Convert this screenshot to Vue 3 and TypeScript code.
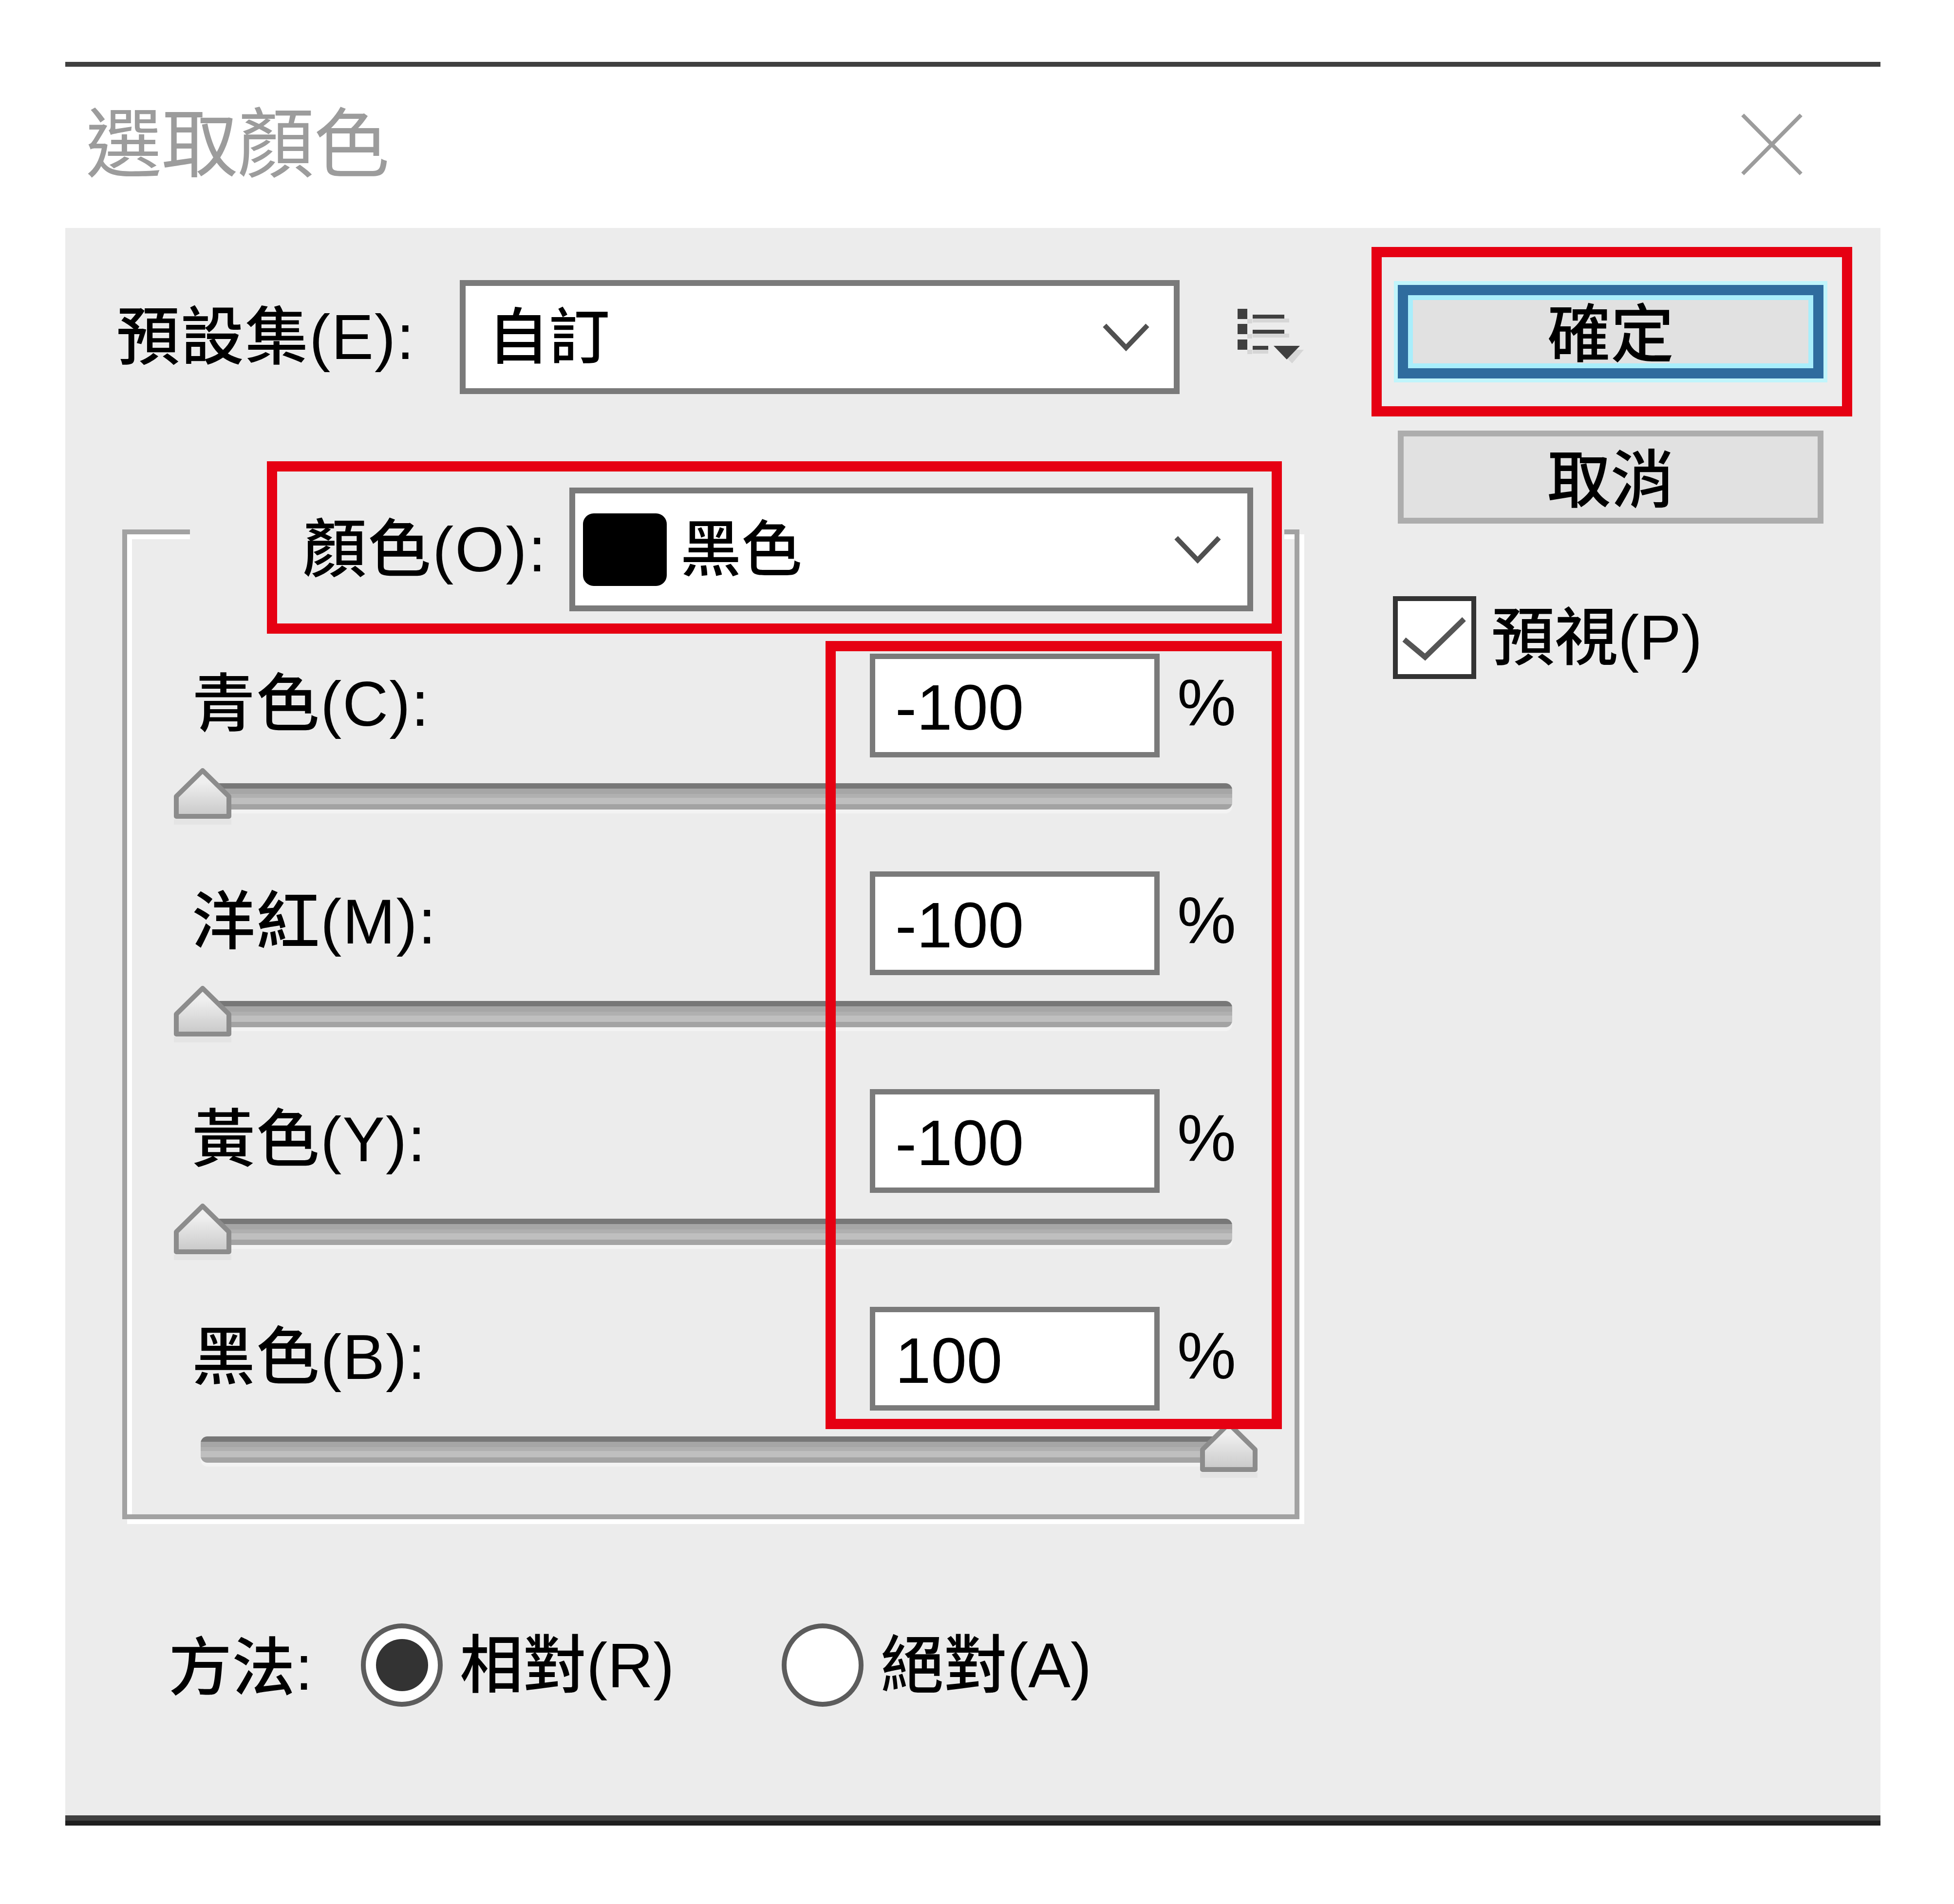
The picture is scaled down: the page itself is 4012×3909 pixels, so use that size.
<script setup lang="ts">
interface Channel {
  label: string
  value: string
  atMax: boolean
}

const channels: Channel[] = [
  { label: '青色(C):', value: '-100', atMax: false },
  { label: '洋紅(M):', value: '-100', atMax: false },
  { label: '黃色(Y):', value: '-100', atMax: false },
  { label: '黑色(B):', value: '100', atMax: true },
]
</script>

<template>
  <div class="page">
    <div class="dialog">
      <header class="titlebar">
        <span class="title">選取顏色</span>
        <svg class="close" viewBox="0 0 126 127" aria-label="關閉">
          <path d="M3 3 L123 124 M123 3 L3 124" />
        </svg>
      </header>

      <main class="panel">
        <section class="left">
          <div class="preset-row">
            <span class="preset-label">預設集(E):</span>
            <div class="select preset-select">
              <span class="select-text">自訂</span>
              <svg class="chevron" viewBox="0 0 96 60"><path d="M4 6 L48 52 L92 6" /></svg>
            </div>
            <svg class="preset-icon" viewBox="0 0 136 116">
              <g fill="#d6d6d6">
                <rect x="20" y="21" width="10" height="9" />
                <rect x="20" y="52" width="10" height="9" />
                <rect x="20" y="84" width="10" height="9" />
                <rect x="31" y="20" width="75" height="8" />
                <rect x="31" y="51" width="75" height="8" />
                <rect x="31" y="84" width="32" height="8" />
                <path d="M84 84 H136 L112 112 Z" />
              </g>
              <g fill="#3f3f3f">
                <rect x="0" y="0" width="20" height="21" />
                <rect x="0" y="31" width="20" height="21" />
                <rect x="0" y="63" width="20" height="21" />
                <rect x="31" y="12" width="65" height="8" />
                <rect x="31" y="43" width="65" height="8" />
                <rect x="31" y="76" width="32" height="8" />
                <path d="M74 76 H128 L101 104 Z" />
              </g>
            </svg>
          </div>

          <div class="group">
            <div class="legend">
              <div class="color-box">
                <span class="color-label">顏色(O):</span>
                <div class="select color-select">
                  <span class="swatch"></span>
                  <span class="select-text">黑色</span>
                  <svg class="chevron" viewBox="0 0 96 60"><path d="M4 6 L48 52 L92 6" /></svg>
                </div>
              </div>
            </div>

            <div class="channels">
              <div v-for="c in channels" :key="c.label" class="channel">
                <div class="channel-top">
                  <span class="channel-label">{{ c.label }}</span>
                  <div class="field">{{ c.value }}</div>
                  <span class="percent">%</span>
                </div>
                <div class="slider">
                  <div class="track"></div>
                  <svg class="thumb" :class="{ 'thumb-max': c.atMax }" viewBox="0 0 118 118">
                    <defs>
                      <linearGradient :id="'grad-' + c.value + c.atMax" x1="0" y1="0" x2="0" y2="1">
                        <stop offset="0.25" stop-color="#efefef" />
                        <stop offset="1" stop-color="#c8c8c8" />
                      </linearGradient>
                    </defs>
                    <rect x="0" y="107" width="118" height="11" fill="#e4e4e4" />
                    <path
                      d="M59 7 L5 60 V101 H113 V60 Z"
                      :fill="'url(#grad-' + c.value + c.atMax + ')'"
                      stroke="#8c8c8c"
                      stroke-width="10"
                      stroke-linejoin="round"
                    />
                  </svg>
                </div>
              </div>
            </div>

            <div class="values-box"></div>
          </div>

          <div class="method">
            <span class="method-label">方法:</span>
            <div class="radio-option">
              <span class="radio"><span class="radio-dot"></span></span>
              <span class="radio-text">相對(R)</span>
            </div>
            <div class="radio-option">
              <span class="radio"></span>
              <span class="radio-text">絕對(A)</span>
            </div>
          </div>
        </section>

        <aside class="right">
          <div class="ok-box">
            <button class="btn btn-ok" type="button">確定</button>
          </div>
          <button class="btn btn-cancel" type="button">取消</button>
          <div class="preview">
            <span class="checkbox">
              <svg viewBox="0 0 151 150"><path d="M13 79 L56 115 L136 37" /></svg>
            </span>
            <span class="preview-text">預視(P)</span>
          </div>
        </aside>
      </main>
    </div>
  </div>
</template>

<style>
html,
body {
  margin: 0;
  background: #fff;
}
</style>

<style scoped>
.page {
  box-sizing: border-box;
  width: 4012px;
  height: 3909px;
  padding: 127px 151px 0 134px;
  background: #fff;
  color: #000;
  font-family: "Liberation Sans", "Noto Sans CJK TC", sans-serif;
  font-size: 130px;
  line-height: 1;
  font-kerning: none;
}

.dialog {
  display: flex;
  flex-direction: column;
  height: 3621px;
  border-top: 10px solid #404040;
  border-bottom: 10px solid #1f1f1f;
  box-sizing: border-box;
}

.titlebar {
  flex: none;
  box-sizing: border-box;
  height: 331px;
  padding: 0 160px 12px 42px;
  display: flex;
  align-items: center;
  justify-content: space-between;
}

.title {
  font-size: 156px;
  color: #9c9c9c;
  font-weight: 400;
}

.close {
  width: 126px;
  height: 127px;
}

.close path {
  fill: none;
  stroke: #9c9c9c;
  stroke-width: 8;
}

.panel {
  flex: 1;
  display: flex;
  background: #ececec;
  font-weight: 500;
  box-shadow: inset 0 -11px 0 #404040;
}

.left {
  flex: none;
  width: 2682px;
  box-sizing: border-box;
  padding-top: 107px;
}

.preset-row {
  display: flex;
  align-items: center;
  height: 234px;
  margin-left: 105px;
}

.preset-label {
  flex: none;
  width: 705px;
  letter-spacing: 2px;
}

.select {
  box-sizing: border-box;
  display: flex;
  align-items: center;
  background: #fff;
  border: 12px solid #7a7a7a;
}

.preset-select {
  width: 1478px;
  height: 234px;
  padding: 0 50px 0 46px;
}

.select-text {
  flex: 1;
  font-size: 125px;
}

.chevron {
  flex: none;
  width: 96px;
  height: 60px;
}

.chevron path {
  fill: none;
  stroke: #505050;
  stroke-width: 10;
}

.preset-icon {
  flex: none;
  width: 136px;
  height: 116px;
  margin-left: 119px;
}

.group {
  position: relative;
  box-sizing: border-box;
  width: 2417px;
  margin: 278px 0 0 117px;
  padding-bottom: 75px;
  border: 10px solid #a2a2a2;
  box-shadow: inset 10px 10px 0 #fff, 10px 10px 0 #fff;
}

.legend {
  box-sizing: border-box;
  width: 2247px;
  margin: -150px 0 0 129px;
  padding: 0 5px 0 158px;
  background: #ececec;
}

.color-box {
  box-sizing: border-box;
  display: flex;
  align-items: center;
  height: 354px;
  padding: 33px 38px 25px 53px;
  border: 21px solid #e60012;
}

.color-label {
  flex: none;
  width: 547px;
  letter-spacing: 3px;
}

.color-select {
  flex: 1;
  height: 254px;
  padding: 0 54px 0 16px;
}

.swatch {
  flex: none;
  width: 172px;
  height: 149px;
  margin-right: 28px;
  border-radius: 22px;
  background: #000;
}

.channels {
  display: flex;
  flex-direction: column;
  gap: 96px;
  margin-top: 41px;
}

.channel-top {
  display: flex;
  align-items: center;
  height: 213px;
  margin-left: 133px;
}

.channel-label {
  flex: none;
  width: 1392px;
  padding-bottom: 8px;
  letter-spacing: 2px;
}

.field {
  flex: none;
  box-sizing: border-box;
  width: 595px;
  height: 213px;
  padding: 8px 0 0 41px;
  display: flex;
  align-items: center;
  background: #fff;
  border: 11px solid #7a7a7a;
  font-size: 132px;
}

.percent {
  flex: none;
  margin-left: 36px;
  padding-bottom: 14px;
  font-size: 136px;
}

.slider {
  position: relative;
  width: 2225px;
  height: 118px;
  margin: 20px 0 0 96px;
}

.track {
  box-sizing: border-box;
  height: 54px;
  margin: 0 52px 0 55px;
  position: relative;
  top: 33px;
  border-radius: 14px;
  box-shadow: 0 8px 0 #f3f3f3;
  background: linear-gradient(
    to bottom,
    #777 0 11px,
    #a6a6a6 11px 22px,
    #b0b0b0 22px 30px,
    #bfbfbf 30px 43px,
    #a3a3a3 43px 54px
  );
}

.thumb {
  position: absolute;
  top: 0;
  left: 0;
  width: 118px;
  height: 118px;
}

.thumb-max {
  left: auto;
  right: 0;
}

.values-box {
  position: absolute;
  left: 1434px;
  top: 219px;
  box-sizing: border-box;
  width: 937px;
  height: 1618px;
  border: 21px solid #e60012;
  pointer-events: none;
}

.method {
  display: flex;
  align-items: center;
  margin: 214px 0 0 212px;
  height: 171px;
}

.method-label {
  flex: none;
  width: 395px;
  padding-top: 10px;
}

.radio-option {
  flex: none;
  width: 864px;
  display: flex;
  align-items: center;
}

.radio {
  flex: none;
  box-sizing: border-box;
  width: 168px;
  height: 171px;
  margin-right: 35px;
  display: flex;
  align-items: center;
  justify-content: center;
  border: 10px solid #5c5c5c;
  border-radius: 50%;
  background: #fff;
}

.radio-dot {
  width: 107px;
  height: 107px;
  border-radius: 50%;
  background: #333;
}

.right {
  flex: none;
  width: 987px;
  box-sizing: border-box;
  padding-top: 39px;
}

.ok-box {
  box-sizing: border-box;
  height: 348px;
  padding: 57px 38px 57px 33px;
  border: 21px solid #e60012;
}

.btn {
  display: block;
  box-sizing: border-box;
  padding: 12px 0 0;
  background: #e1e1e1;
  color: #000;
  font: inherit;
  line-height: 1;
}

.btn-ok {
  width: 100%;
  height: 192px;
  border: 21px solid #2f6c9e;
  box-shadow: 0 0 0 8px #c0f5fb, inset 0 0 0 10px #a9eefb;
}

.btn-cancel {
  width: 874px;
  height: 191px;
  margin: 29px 0 0 54px;
  border: 12px solid #adadad;
}

.preview {
  display: flex;
  align-items: center;
  margin: 149px 0 0 44px;
}

.checkbox {
  flex: none;
  box-sizing: border-box;
  width: 171px;
  height: 170px;
  margin-right: 31px;
  background: #fff;
  border: 10px solid #333;
}

.checkbox svg {
  display: block;
  width: 151px;
  height: 150px;
}

.checkbox path {
  fill: none;
  stroke: #555;
  stroke-width: 11;
}
</style>
